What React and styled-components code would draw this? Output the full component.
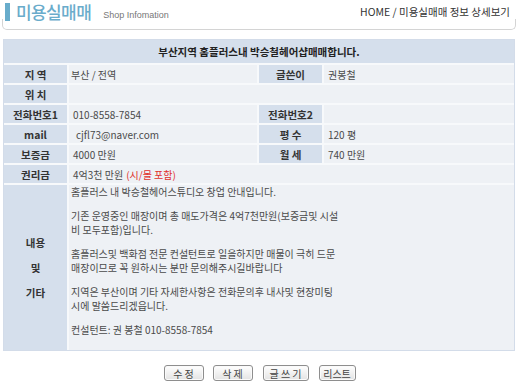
import React from "react";
import styled, { createGlobalStyle } from "styled-components";

const Global = createGlobalStyle`
  html, body { margin: 0; padding: 0; background: #fff; }
  body { font-family: "Noto Sans CJK KR", "Noto Sans", sans-serif; }
`;

const Page = styled.div`
  width: 519px;
`;

const Header = styled.div`
  position: relative;
  height: 30px;
  margin: 0 3px 0 2px;
  display: flex;
  justify-content: space-between;
  align-items: flex-start;
  &::after {
    content: "";
    position: absolute;
    left: 0;
    right: 0;
    bottom: 0;
    height: 10px;
    border: 1px solid #d4d4d4;
    border-top: none;
    border-radius: 0 0 5px 5px;
  }
`;

const TitleGroup = styled.div`
  display: flex;
  align-items: center;
  padding: 3px 0 0 3px;
`;

const TitleBar = styled.span`
  width: 5px;
  height: 18px;
  background: #68accb;
  margin-right: 6px;
`;

const Title = styled.span`
  font-size: 17px;
  font-weight: 500;
  color: #6aaccb;
  letter-spacing: -0.6px;
  line-height: 18px;
`;

const Sub = styled.span`
  font-family: "Liberation Sans", Arial, sans-serif;
  font-size: 9px;
  color: #777;
  margin: 5px 0 0 12px;
`;

const Crumb = styled.span`
  font-size: 10.5px;
  color: #333;
  line-height: 14px;
  margin: 5px 6px 0 0;
`;

const Board = styled.div`
  margin: 9px 4px 0 3px;
  border: 1px solid #d3dce9;
  background: #f7f9fb;
  display: grid;
  grid-template-columns: 63px 188px 63px 1fr;
  grid-auto-rows: auto;
  gap: 2px;
  font-size: 10px;
`;

const Caption = styled.div`
  grid-column: 1 / -1;
  height: 23px;
  background: #d5dfec;
  display: flex;
  align-items: center;
  justify-content: center;
  font-weight: 700;
  font-size: 10.5px;
  color: #222;
`;

const Label = styled.div`
  background: #d5dfec;
  height: ${(p) => (p.$tall ? 165 : 18)}px;
  display: flex;
  flex-direction: column;
  align-items: center;
  justify-content: center;
  gap: 10px;
  font-weight: 700;
  font-size: 10.5px;
  color: #333;
  white-space: pre;
`;

const Value = styled.div`
  background: #eef1f5;
  height: 18px;
  display: flex;
  align-items: center;
  padding-left: ${(p) => p.$indent || 2}px;
  color: #4a4a4a;
  white-space: pre;
  grid-column: span ${(p) => p.$span || 1};
`;

const Red = styled.span`
  color: #e0302c;
  margin-left: 3px;
`;

const Content = styled.div`
  grid-column: span 3;
  height: 165px;
  background: #eef1f5;
  padding: 0 0 0 2px;
  box-sizing: border-box;
  color: #4a4a4a;
`;

const Line = styled.div`
  height: ${(p) => (p.$blank ? 10 : 14)}px;
  line-height: 14px;
  white-space: pre;
`;

const Buttons = styled.div`
  display: flex;
  justify-content: center;
  margin-top: 14px;
  gap: 9px;
`;

const Btn = styled.button`
  width: ${(p) => p.$w}px;
  height: 16px;
  padding: 0;
  margin-left: ${(p) => p.$ml || 0}px;
  border: 1px solid #8e8e8e;
  border-radius: 3px;
  background: linear-gradient(#ffffff, #e3e3e3);
  box-shadow: inset 0 0 0 1px #fafafa;
  font-family: "Noto Sans CJK KR", sans-serif;
  font-size: 10px;
  line-height: 13px;
  color: #444;
  white-space: pre;
`;

const lines = [
  "홈플러스 내 박승철헤어스튜디오 창업 안내입니다.",
  "",
  "기존 운영중인 매장이며 총 매도가격은 4억7천만원(보증금및 시설",
  "비 모두포함)입니다.",
  "",
  "홈플러스및 백화점 전문 컨설턴트로 일을하지만 매물이 극히 드문",
  "매장이므로 꼭 원하시는 분만 문의해주시길바랍니다",
  "",
  "지역은 부산이며 기타 자세한사항은 전화문의후 내사및 현장미팅",
  "시에 말씀드리겠읍니다.",
  "",
  "컨설턴트: 권 봉철 010-8558-7854",
];

export default function App() {
  return (
    <Page>
      <Global />
      <Header>
        <TitleGroup>
          <TitleBar />
          <Title>미용실매매</Title>
          <Sub>Shop Infomation</Sub>
        </TitleGroup>
        <Crumb>HOME / 미용실매매 정보 상세보기</Crumb>
      </Header>

      <Board>
        <Caption>부산지역 홈플러스내 박승철헤어샵매매합니다.</Caption>

        <Label>지 역</Label>
        <Value>부산 / 전역</Value>
        <Label>글쓴이</Label>
        <Value $indent={4}>권봉철</Value>

        <Label>위 치</Label>
        <Value $span={3}></Value>

        <Label>전화번호1</Label>
        <Value $indent={4}>010-8558-7854</Value>
        <Label>전화번호2</Label>
        <Value></Value>

        <Label>mail</Label>
        <Value $indent={7}>cjfl73@naver.com</Value>
        <Label>평 수</Label>
        <Value $indent={4}>120 평</Value>

        <Label>보증금</Label>
        <Value $indent={4}>4000 만원</Value>
        <Label>월 세</Label>
        <Value $indent={4}>740 만원</Value>

        <Label>권리금</Label>
        <Value $span={3} $indent={4}>
          4억3천 만원<Red>(시/몰 포함)</Red>
        </Value>

        <Label $tall>
          <span>내용</span>
          <span>및</span>
          <span>기타</span>
        </Label>
        <Content>
          {lines.map((l, i) => (
            <Line key={i} $blank={l === ""}>
              {l}
            </Line>
          ))}
        </Content>
      </Board>

      <Buttons>
        <Btn $w={40}>수 정</Btn>
        <Btn $w={40}>삭 제</Btn>
        <Btn $w={46} $ml={1}>글 쓰 기</Btn>
        <Btn $w={37} $ml={1}>리스트</Btn>
      </Buttons>
    </Page>
  );
}
